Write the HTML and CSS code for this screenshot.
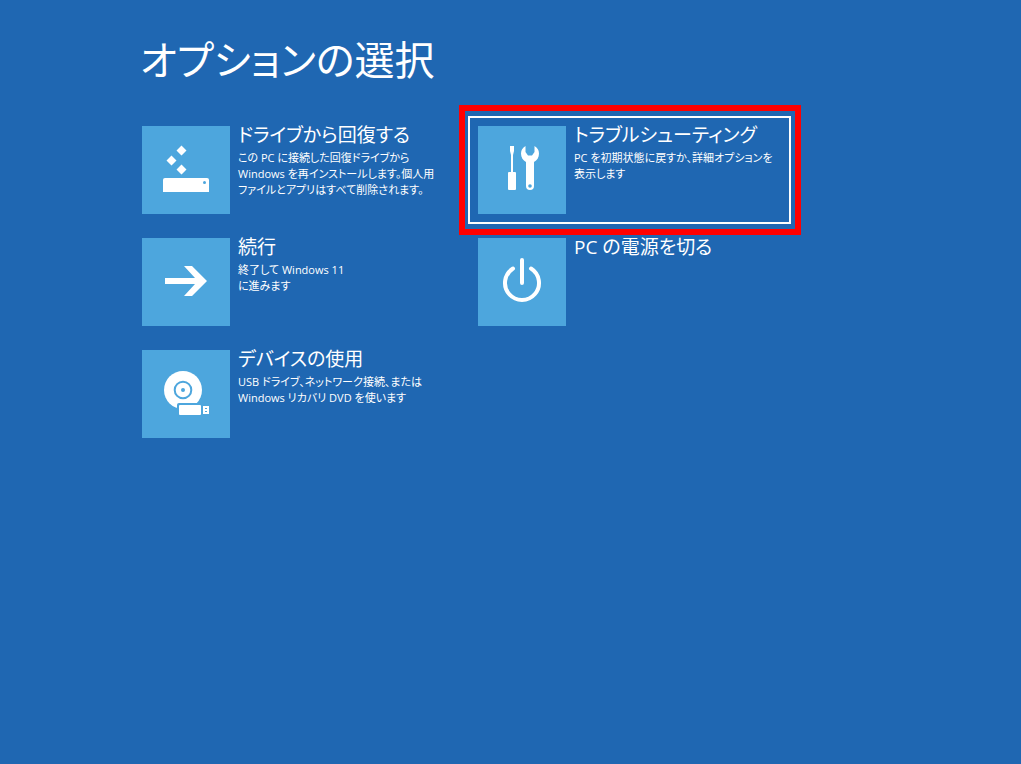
FILE: index.html
```html
<!DOCTYPE html>
<html lang="ja">
<head>
    <meta charset="UTF-8">
    <meta name="viewport" content="width=device-width, initial-scale=1.0">
    <title>オプションの選択</title>
    <link rel="stylesheet" href="styles.css">
</head>
<body>
    <main>
        <h1>オプションの選択</h1>
        <div class="options">
            <button type="button" class="option">
                <svg class="tile" viewBox="0 0 88 88" aria-hidden="true">
                    <path d="M39.5 19.5l5 5-5 5-5-5zM29.5 29.5l5 5-5 5-5-5zM39.5 38.5l5 5-5 5-5-5z"/>
                    <path d="M21 66V54q0-2 2-2h42q2 0 2 2v12z"/>
                    <circle class="cut" cx="62.5" cy="56.5" r="1.5"/>
                </svg>
                <span class="text">
                    <span class="title">ドライブから回復する</span>
                    <span class="desc">この PC に接続した回復ドライブから<br>Windows を再インストールします。個人用<br>ファイルとアプリはすべて削除されます。</span>
                </span>
            </button>
            <button type="button" class="option selected">
                <svg class="tile" viewBox="0 0 88 88" aria-hidden="true">
                    <path d="M32 20h4v5l-1 4v17h2q1 0 1 1v16q0 1-1 1h-6q-1 0-1-1V47q0-1 1-1h2V29l-1-4z"/>
                    <path d="M47.5 20Q43 22.5 43 27.5c0 4 2 7 5 8.500V60a4 4 0 0 0 8 0V36c3-1.500 5-4.500 5-8.500Q61 22.5 56.5 20v6L54 29.5h-4L47.5 26z"/>
                    <circle class="cut" cx="52" cy="60" r="1.8"/>
                </svg>
                <span class="text">
                    <span class="title">トラブルシューティング</span>
                    <span class="desc">PC を初期状態に戻すか、詳細オプションを<br>表示します</span>
                </span>
            </button>
            <button type="button" class="option">
                <svg class="tile" viewBox="0 0 88 88" aria-hidden="true">
                    <path d="M23 40h30L42 28h8l15 15-15 15h-8l11-12H23z"/>
                </svg>
                <span class="text">
                    <span class="title">続行</span>
                    <span class="desc">終了して Windows 11<br>に進みます</span>
                </span>
            </button>
            <button type="button" class="option">
                <svg class="tile" viewBox="0 0 88 88" aria-hidden="true">
                    <path class="line" d="M35 30.5a17 17 0 1 0 18 0M44 22v23"/>
                </svg>
                <span class="text">
                    <span class="title">PC の電源を切る</span>
                </span>
            </button>
            <button type="button" class="option">
                <svg class="tile" viewBox="0 0 88 88" aria-hidden="true">
                    <circle cx="41" cy="40" r="19"/>
                    <circle class="ring" cx="41" cy="40" r="8.3"/>
                    <circle class="cut" cx="41" cy="40" r="2"/>
                    <rect class="cut" x="35" y="53" width="34" height="14" rx="2"/>
                    <rect x="37" y="55" width="22" height="10" rx="1"/>
                    <path d="M61 56h6v8h-6z"/>
                    <path class="cut" d="M63 58h2v1h-2zM63 61h2v1h-2z"/>
                </svg>
                <span class="text">
                    <span class="title">デバイスの使用</span>
                    <span class="desc">USB ドライブ、ネットワーク接続、または<br>Windows リカバリ DVD を使います</span>
                </span>
            </button>
        </div>
    </main>
</body>
</html>
```
FILE: styles.css
```css
body {
    margin: 0;
    background: #1f67b2;
    color: #fff;
    font-family: "Open Sans", "Noto Sans CJK JP", sans-serif;
    font-feature-settings: "palt";
}
main {
    padding: 30px 132px;
}
h1 {
    margin: 0 0 26px;
    padding-left: 8px;
    font-size: 40px;
    line-height: 60px;
    font-weight: 400;
    white-space: nowrap;
}
.options {
    display: grid;
    grid-template-columns: repeat(2, minmax(0, 323px));
    gap: 4px 13px;
}
.option {
    position: relative;
    display: flex;
    align-items: flex-start;
    gap: 8px;
    padding: 4px 8px;
    border: 2px solid transparent;
    background: none;
    color: inherit;
    font: inherit;
    font-feature-settings: inherit;
    text-align: left;
    white-space: nowrap;
    cursor: pointer;
}
.option.selected {
    border-color: #fff;
}
/* red marker around the option to pick */
.option.selected::after {
    content: "";
    position: absolute;
    inset: -13px -12px -13px -11px;
    border: 6px solid #f00;
}
.tile {
    flex: none;
    width: 88px;
    height: 88px;
    margin: 4px 0;
    background: #4da6dd;
    fill: #fff;
}
.cut {
    fill: #4da6dd;
}
.ring {
    fill: none;
    stroke: #4da6dd;
    stroke-width: 2;
}
.line {
    fill: none;
    stroke: #fff;
    stroke-width: 4;
    stroke-linecap: round;
}
.title,
.desc {
    display: block;
}
.title {
    margin-bottom: 2px;
    font-size: 19px;
    line-height: 26px;
}
.desc {
    font-size: 11px;
    line-height: 16px;
}
```
